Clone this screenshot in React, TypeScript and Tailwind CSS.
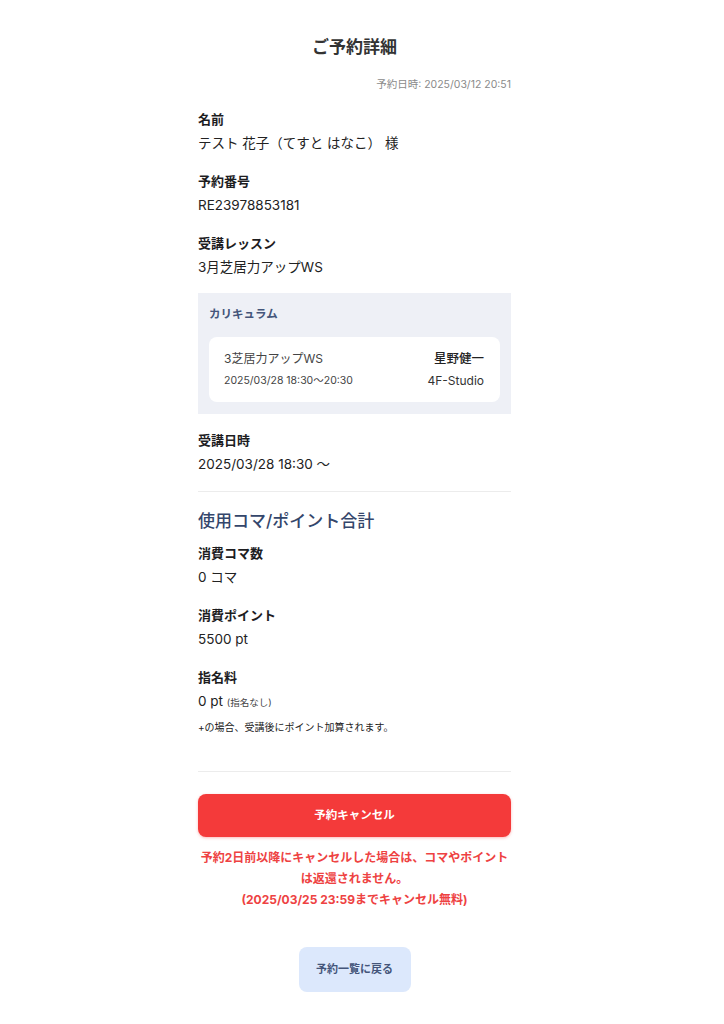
const font = { fontFamily: 'Inter, "Noto Sans CJK JP", sans-serif' };

function Field({ label, children }: { label: string; children: React.ReactNode }) {
  return (
    <div>
      <p className="text-[13px] font-bold leading-[24px] text-[#1d1d1f]">{label}</p>
      <div className="text-[13.5px] leading-[24px] text-[#222]">{children}</div>
    </div>
  );
}

export default function App() {
  return (
    <div className="min-h-[1024px] bg-white" style={font}>
      <div className="ml-[198px] w-[313px] pt-[35px] pb-[33px]">
        <h1 className="text-center text-[17px] font-bold leading-[24px] text-[#333]">ご予約詳細</h1>
        <p className="mt-[19px] text-right text-[10.5px] leading-[14px] text-[#8a8a8a]">予約日時: 2025/03/12 20:51</p>

        <div className="mt-[15px] flex flex-col gap-[14px]">
          <Field label="名前">テスト 花子（てすと はなこ） 様</Field>
          <Field label="予約番号">RE23978853181</Field>
          <Field label="受講レッスン">3月芝居力アップWS</Field>

          {/* Curriculum */}
          <section className="bg-[#eef0f6] px-[11px] pt-[13px] pb-[12px]">
            <p className="text-[11.5px] font-bold leading-[16px] text-[#44557a]">カリキュラム</p>
            <div className="mt-[15px] flex items-start justify-between rounded-lg bg-white pl-[15px] pr-[16px] pt-[13px] pb-[12px]">
              <div className="flex flex-col gap-[4px]">
                <p className="text-[12px] leading-[18px] text-[#444]">3芝居力アップWS</p>
                <p className="text-[10.5px] leading-[18px] text-[#444]">2025/03/28 18:30〜20:30</p>
              </div>
              <div className="flex flex-col items-end gap-[4px]">
                <p className="text-[12.5px] font-medium leading-[18px] text-[#222]">星野健一</p>
                <p className="text-[12px] leading-[18px] text-[#333]">4F-Studio</p>
              </div>
            </div>
          </section>

          <Field label="受講日時">2025/03/28 18:30 〜</Field>
        </div>

        <hr className="mt-[15px] border-t border-[#ececec]" />

        <h2 className="mt-[17px] text-[17px] font-medium leading-[24px] text-[#34466b]">使用コマ/ポイント合計</h2>

        <div className="mt-[8px] flex flex-col gap-[14px]">
          <Field label="消費コマ数">0 コマ</Field>
          <Field label="消費ポイント">5500 pt</Field>
          <div>
            <Field label="指名料">
              0 pt <span className="text-[9.5px] text-[#444]">(指名なし)</span>
            </Field>
            <p className="mt-[4px] text-[10px] leading-[16px] text-[#222]">+の場合、受講後にポイント加算されます。</p>
          </div>
        </div>

        <hr className="mt-[36px] border-t border-[#ececec]" />

        <button className="mt-[22px] flex h-[43px] w-full items-center justify-center rounded-lg bg-[#f43a3a] text-[11.5px] font-bold text-white shadow-[0_1px_3px_rgba(244,58,58,0.35)]">
          予約キャンセル
        </button>

        <p className="mt-[10px] text-center text-[12px] font-bold leading-[21px] text-[#ee4242]">
          予約2日前以降にキャンセルした場合は、コマやポイント
          <br />
          は返還されません。
          <br />
          (2025/03/25 23:59までキャンセル無料)
        </p>

        <div className="mt-[37px] flex justify-center">
          <button className="flex h-[45px] w-[112px] items-center justify-center rounded-lg bg-[#dce8fc] text-[11px] font-bold text-[#44557a]">
            予約一覧に戻る
          </button>
        </div>
      </div>
    </div>
  );
}
